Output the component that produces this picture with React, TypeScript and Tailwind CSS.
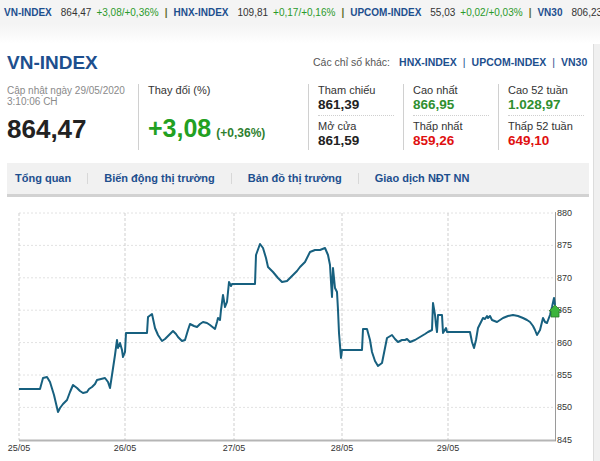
import React from "react";

const font = { fontFamily: '"Liberation Sans", Arial, sans-serif' };

const ticker = [
  { name: "VN-INDEX", value: "864,47", change: "+3,08/+0,36%" },
  { name: "HNX-INDEX", value: "109,81", change: "+0,17/+0,16%" },
  { name: "UPCOM-INDEX", value: "55,03", change: "+0,02/+0,03%" },
  { name: "VN30", value: "806,23", change: "" },
];

const stats = [
  [
    { label: "Tham chiếu", value: "861,39", color: "text-[#222]" },
    { label: "Mở cửa", value: "861,59", color: "text-[#222]" },
  ],
  [
    { label: "Cao nhất", value: "866,95", color: "text-[#2f8f2f]" },
    { label: "Thấp nhất", value: "859,26", color: "text-[#e01010]" },
  ],
  [
    { label: "Cao 52 tuần", value: "1.028,97", color: "text-[#2f8f2f]" },
    { label: "Thấp 52 tuần", value: "649,10", color: "text-[#e01010]" },
  ],
];

const tabs = ["Tổng quan", "Biến động thị trường", "Bản đồ thị trường", "Giao dịch NĐT NN"];

// page coordinates of the intraday line
const pts: [number, number][] = [
  [19, 389], [40, 389], [43, 378], [47, 377], [50, 382], [54, 395], [58, 412], [60, 408], [63, 404], [67, 400],
  [70, 392], [73, 385], [77, 388], [80, 391], [83, 393], [87, 392], [89, 389], [92, 387], [95, 384], [97, 380],
  [101, 379], [105, 378], [108, 382], [110, 388], [112, 375], [115, 355], [117, 340], [118, 348], [120, 343],
  [122, 350], [123, 357], [125, 352], [126, 333], [147, 333], [148, 317], [152, 314], [155, 328], [158, 335],
  [162, 341], [165, 339], [168, 336], [173, 331], [176, 334], [178, 337], [182, 341], [185, 340], [188, 330],
  [190, 324], [194, 326], [197, 327], [200, 324], [203, 322], [207, 323], [210, 325], [215, 329], [217, 322],
  [218, 318], [220, 320], [221, 310], [223, 295], [225, 307], [227, 302], [229, 282], [231, 286], [232, 284],
  [255, 284], [256, 255], [260, 244], [263, 248], [266, 258], [268, 267], [273, 272], [278, 278], [282, 282],
  [287, 281], [290, 278], [293, 275], [297, 271], [300, 267], [305, 262], [310, 252], [315, 250], [320, 250],
  [325, 248], [328, 255], [330, 265], [331, 282], [332, 297], [333, 268], [335, 288], [337, 292], [338, 310],
  [339, 333], [341, 358], [342, 350], [362, 350], [363, 329], [367, 329], [370, 340], [372, 352], [375, 361],
  [378, 366], [382, 363], [385, 348], [387, 338], [392, 335], [395, 339], [398, 342], [402, 340], [405, 340],
  [407, 339], [410, 342], [415, 340], [420, 337], [425, 334], [428, 332], [432, 330], [433, 303], [435, 315],
  [436, 325], [437, 332], [438, 315], [442, 315], [443, 333], [446, 328], [447, 332], [470, 332], [472, 342],
  [474, 348], [476, 340], [478, 328], [483, 318], [485, 319], [487, 316], [488, 318], [490, 316], [492, 320],
  [497, 322], [503, 318], [508, 316], [513, 315], [518, 316], [523, 318], [527, 320], [530, 322], [533, 326],
  [535, 330], [537, 335], [540, 330], [543, 318], [545, 322], [547, 323], [550, 315], [552, 307], [554, 298],
  [555, 305],
];

const yLevels = [880, 875, 870, 865, 860, 855, 850, 845];
const yOf = (v: number) => 213 + (880 - v) * 6.48;
const days = [
  { x: 19, label: "25/05" },
  { x: 125, label: "26/05" },
  { x: 234, label: "27/05" },
  { x: 342, label: "28/05" },
  { x: 448, label: "29/05" },
];

function Chart() {
  return (
    <svg width="594" height="261" viewBox="0 200 594 261" className="block mt-[3px]">
      {yLevels.slice(0, -1).map((v) => (
        <line key={v} x1={19} x2={555} y1={yOf(v)} y2={yOf(v)} stroke="#e2e2e2" strokeDasharray="2 2" />
      ))}
      {days.map((d) => (
        <line key={d.label} x1={d.x} x2={d.x} y1={213} y2={440} stroke="#cfcfcf" strokeDasharray="3 2" />
      ))}
      <line x1={19} x2={556} y1={440.5} y2={440.5} stroke="#b5b5b5" strokeWidth="2" />
      <line x1={555.5} x2={555.5} y1={212} y2={441} stroke="#9a9a9a" />
      {yLevels.map((v) => (
        <text key={v} x={557} y={yOf(v) + 3} fontSize="9" fill="#333" style={font}>
          {v}
        </text>
      ))}
      {days.map((d) => (
        <text key={d.label} x={d.x} y={451} fontSize="9" fill="#333" textAnchor="middle" style={font}>
          {d.label}
        </text>
      ))}
      <polyline
        points={pts.map((p) => p.join(",")).join(" ")}
        fill="none"
        stroke="#17607f"
        strokeWidth="2"
        strokeLinejoin="round"
      />
      <polygon
        points="555,305 561,311 559,311 559,317 551,317 551,311 549,311"
        fill="#3cb43c"
        stroke="#2a7a2a"
        strokeWidth="0.8"
      />
    </svg>
  );
}

export default function App() {
  return (
    <div className="w-[600px] h-[461px] overflow-hidden bg-[#f0f0f0]" style={font}>
      {/* ticker */}
      <div className="h-6 bg-[#f4f4f4] flex items-center pl-1 text-[10px] whitespace-nowrap overflow-hidden">
        {ticker.map((t, i) => (
          <div key={t.name} className="flex items-center shrink-0">
            {i > 0 && <span className="mx-[6px] font-bold text-[#5f6f2a]">|</span>}
            <span className="font-bold text-[#1d4f8e]">{t.name}</span>
            <span className="ml-[9px] text-[#333]">{t.value}</span>
            {t.change && <span className="ml-[5px] text-[#2a9a2a]">{t.change}</span>}
          </div>
        ))}
      </div>
      <div className="h-5 bg-gradient-to-b from-[#f4f4f4] to-white" />

      <div className="w-[594px] bg-white border-r border-[#dcdcdc] pt-2 h-[417px]">
        {/* title row */}
        <div className="flex items-center h-[22px] pl-[7px]">
          <div className="text-[19px] font-bold text-[#1d4f8e] w-[306px]">VN-INDEX</div>
          <div className="text-[10.5px] text-[#555]">
            Các chỉ số khác:
            <span className="ml-[9px] font-bold text-[#1d4f8e]">HNX-INDEX</span>
            <span className="mx-[6px] text-[#1d4f8e]">|</span>
            <span className="font-bold text-[#1d4f8e]">UPCOM-INDEX</span>
            <span className="mx-[6px] text-[#1d4f8e]">|</span>
            <span className="font-bold text-[#1d4f8e]">VN30</span>
          </div>
        </div>

        {/* summary row */}
        <div className="flex mt-[10px] h-[66px]">
          <div className="w-[139px] pl-[7px] border-r border-[#d0d0d0]">
            <div className="text-[10px] leading-[11px] text-[#8a8a8a] pt-[1px]">
              Cập nhật ngày 29/05/2020
              <br />
              3:10:06 CH
            </div>
            <div className="text-[26px] leading-[30px] font-bold text-[#222] mt-[7px]">864,47</div>
          </div>
          <div className="w-[169px] pl-[9px]">
            <div className="text-[11px] leading-[12px] text-[#333]">Thay đổi (%)</div>
            <div className="flex items-baseline mt-[17px]">
              <span className="text-[25px] leading-[30px] font-bold text-[#22a022]">+3,08</span>
              <span className="ml-[5px] text-[12px] font-bold text-[#2f7f2f]">(+0,36%)</span>
            </div>
          </div>
          {stats.map((col, i) => (
            <div key={i} className="w-[95px] border-l border-[#d0d0d0] px-[9px]">
              {col.map((s, j) => (
                <div key={s.label} className={j === 0 ? "border-b border-dotted border-[#cfcfcf] pb-[2px] mb-[4px]" : ""}>
                  <div className="text-[11px] leading-[13px] text-[#333]">{s.label}</div>
                  <div className={`text-[13.5px] leading-[16px] font-bold ${s.color}`}>{s.value}</div>
                </div>
              ))}
            </div>
          ))}
        </div>

        {/* tabs */}
        <div className="mt-[13px] ml-[7px] w-[582px] h-[34px] bg-[#f1f1f1] border-b-[3px] border-[#d2d2d2] flex items-center pl-[8px]">
          {tabs.map((t, i) => (
            <div key={t} className="flex items-center">
              {i > 0 && <span className="mx-4 w-px h-[11px] bg-[#d8d8d8]" />}
              <span className="text-[11px] font-bold text-[#1d4f8e]">{t}</span>
            </div>
          ))}
        </div>

        <Chart />
      </div>
    </div>
  );
}
